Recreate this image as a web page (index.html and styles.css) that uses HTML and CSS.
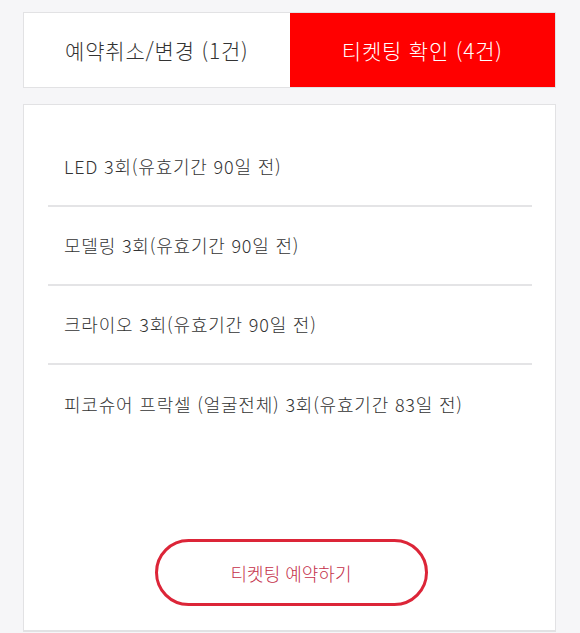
FILE: index.html
```html
<!DOCTYPE html>
<html lang="ko">
<head>
    <meta charset="UTF-8">
    <meta name="viewport" content="width=device-width, initial-scale=1.0">
    <title>티켓팅 확인</title>
    <link rel="stylesheet" href="styles.css">
</head>
<body>
    <div class="page">
        <div class="tabs">
            <div class="tab">예약취소/변경 (1건)</div>
            <div class="tab active">티켓팅 확인 (4건)</div>
        </div>

        <div class="ticket-box">
            <ul class="ticket-list">
                <li class="ticket-item">LED 3회(유효기간 90일 전)</li>
                <li class="ticket-item">모델링 3회(유효기간 90일 전)</li>
                <li class="ticket-item">크라이오 3회(유효기간 90일 전)</li>
                <li class="ticket-item">피코슈어 프락셀 (얼굴전체) 3회(유효기간 83일 전)</li>
            </ul>

            <div class="actions">
                <button class="reserve-btn" type="button">티켓팅 예약하기</button>
            </div>
        </div>
    </div>
</body>
</html>
```

FILE: styles.css
```css
:root {
    --bg-color: #f6f6f8;
    --border-color: #e2e2e4;
    --text-color: #333333;
    --accent: #ff0000;
    --btn-color: #dc2538;
}

* {
    margin: 0;
    padding: 0;
    box-sizing: border-box;
}

body {
    font-family: "Noto Sans CJK KR", "Noto Sans", sans-serif;
    font-weight: 300;
    background-color: var(--bg-color);
    color: var(--text-color);
    min-height: 100vh;
}

.page {
    padding: 12px 24px 0 23px;
    display: flex;
    flex-direction: column;
    gap: 16px;
}

/* Tabs */
.tabs {
    display: flex;
    border: 1px solid var(--border-color);
    background-color: #ffffff;
    height: 76px;
}

.tab {
    flex: 1;
    display: flex;
    justify-content: center;
    align-items: center;
    font-size: 21px;
    letter-spacing: 0.8px;
    color: #333333;
}

.tab.active {
    background-color: var(--accent);
    color: #ffffff;
}

/* Ticket box */
.ticket-box {
    background-color: #ffffff;
    border: 1px solid var(--border-color);
    border-bottom-width: 2px;
    height: 528px;
    padding: 23px 23px 24px 24px;
    display: flex;
    flex-direction: column;
}

.ticket-list {
    list-style: none;
    flex: 1;
}

.ticket-item {
    height: 79px;
    display: flex;
    align-items: center;
    padding-left: 16px;
    padding-bottom: 1px;
    font-size: 18px;
    letter-spacing: 0.8px;
    color: #333333;
    border-bottom: 2px solid #e4e4e6;
}

.ticket-item:last-child {
    border-bottom: none;
}

.actions {
    display: flex;
    justify-content: center;
}

.reserve-btn {
    width: 273px;
    height: 67px;
    border: 3px solid var(--btn-color);
    border-radius: 34px;
    background-color: #ffffff;
    color: #c4304a;
    font-family: inherit;
    font-weight: 300;
    font-size: 18px;
    margin-left: 2px;
}
```
